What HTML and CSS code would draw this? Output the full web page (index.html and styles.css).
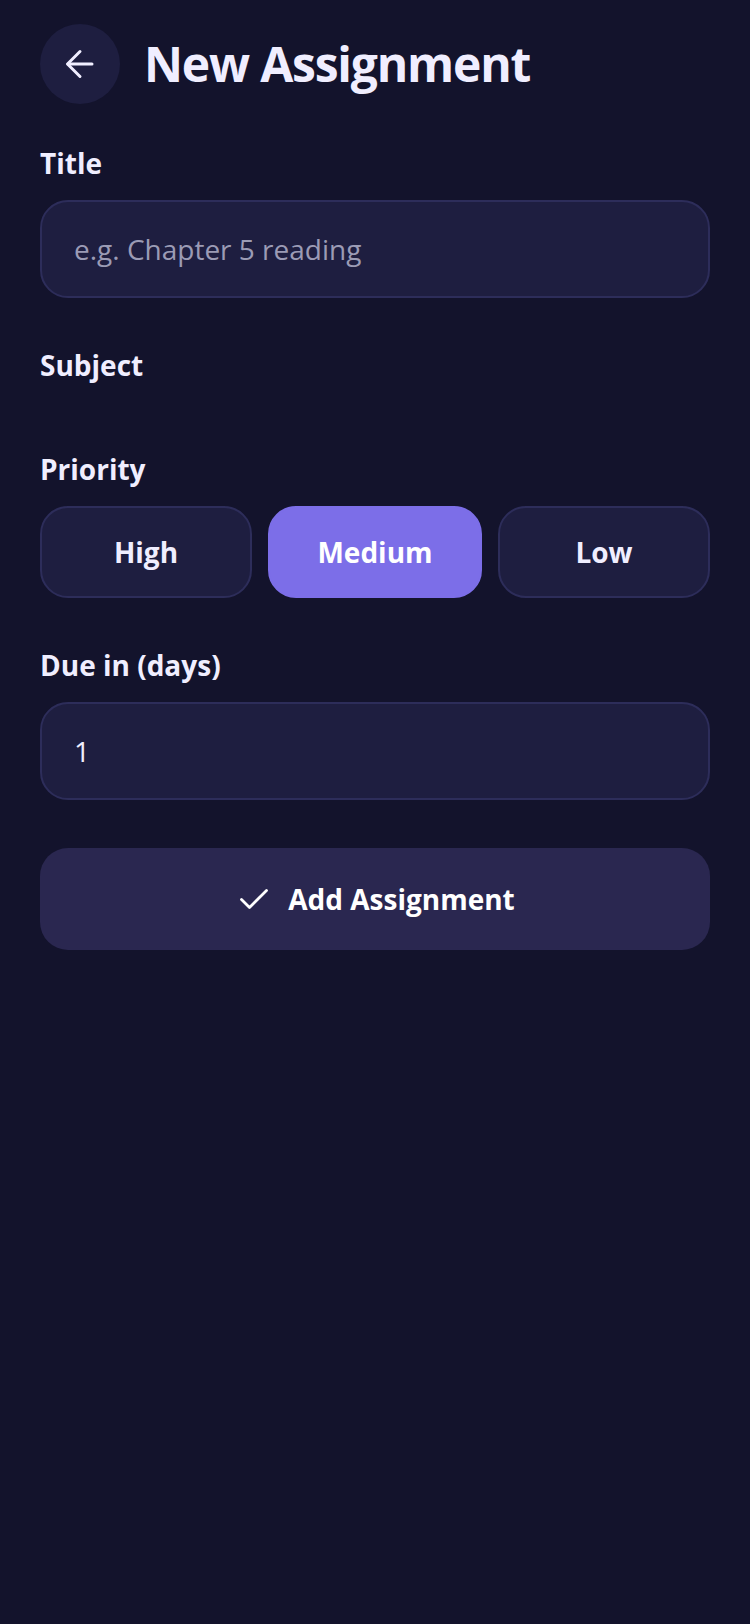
FILE: index.html
```html
<!DOCTYPE html>
<html>
<head>
  <meta charset="UTF-8">
  <title>New Assignment</title>
  <link rel="stylesheet" href="styles.css">
</head>
<body>
  <header class="top">
    <button class="back" type="button" aria-label="Back">
      <svg width="34" height="34" viewBox="0 0 34 34" fill="none" stroke="#f0eeff" stroke-width="3" stroke-linecap="round" stroke-linejoin="round">
        <path d="M29 17H5"/>
        <path d="M17 4.500L4.500 17L17 29.500"/>
      </svg>
    </button>
    <h1>New Assignment</h1>
  </header>

  <label class="label first">Title</label>
  <div class="field placeholder">e.g. Chapter 5 reading</div>

  <label class="label subject">Subject</label>

  <label class="label priority">Priority</label>
  <div class="choices">
    <div class="choice">High</div>
    <div class="choice active">Medium</div>
    <div class="choice">Low</div>
  </div>

  <label class="label due">Due in (days)</label>
  <div class="field">1</div>

  <button class="add" type="button">
    <svg width="32" height="32" viewBox="0 0 32 32" fill="none" stroke="#ffffff" stroke-width="2.800" stroke-linecap="round" stroke-linejoin="round">
      <path d="M3.500 16.500L11.500 24.500L28.500 7.500"/>
    </svg>
    <span>Add Assignment</span>
  </button>
</body>
</html>
```

FILE: styles.css
```css
html, body {
  margin: 0;
  height: 100%;
}

body {
  box-sizing: border-box;
  min-height: 1624px;
  padding: 24px 40px 0;
  background-color: #13132c;
  color: #f0eeff;
  font-family: "Open Sans", sans-serif;
}

.top {
  display: flex;
  align-items: center;
  gap: 24px;
}

.back {
  display: flex;
  align-items: center;
  justify-content: center;
  width: 80px;
  height: 80px;
  padding: 0;
  border: 0;
  border-radius: 50%;
  background-color: #1e1e40;
}

h1 {
  margin: 0;
  font-size: 48px;
  line-height: 70px;
  font-weight: 700;
  letter-spacing: -1.200px;
}

.label {
  display: block;
  font-size: 28px;
  line-height: 38px;
  font-weight: 700;
}

.first { margin-top: 40px; }
.subject { margin-top: 48px; }
.priority { margin-top: 66px; }
.due { margin-top: 48px; }

.field {
  box-sizing: border-box;
  height: 98px;
  margin-top: 18px;
  padding: 0 32px;
  border: 2px solid #2d2d5a;
  border-radius: 28px;
  background-color: #1e1e40;
  font-size: 28px;
  line-height: 94px;
}

.placeholder {
  color: #9b9bb5;
}

.choices {
  display: grid;
  grid-template-columns: 1fr 214px 1fr;
  gap: 16px;
  margin-top: 18px;
}

.choice {
  box-sizing: border-box;
  height: 92px;
  border: 2px solid #2d2d5a;
  border-radius: 28px;
  background-color: #1e1e40;
  font-size: 28px;
  line-height: 88px;
  font-weight: 700;
  text-align: center;
}

.active {
  border-color: #7c6ee8;
  background-color: #7c6ee8;
  color: #ffffff;
}

.add {
  display: flex;
  align-items: center;
  justify-content: center;
  gap: 18px;
  box-sizing: border-box;
  width: 100%;
  height: 102px;
  margin-top: 48px;
  padding: 0 0 0 3px;
  border: 0;
  border-radius: 28px;
  background-color: #2a2750;
  color: #ffffff;
  font-family: inherit;
  font-size: 28px;
  font-weight: 700;
}
```
